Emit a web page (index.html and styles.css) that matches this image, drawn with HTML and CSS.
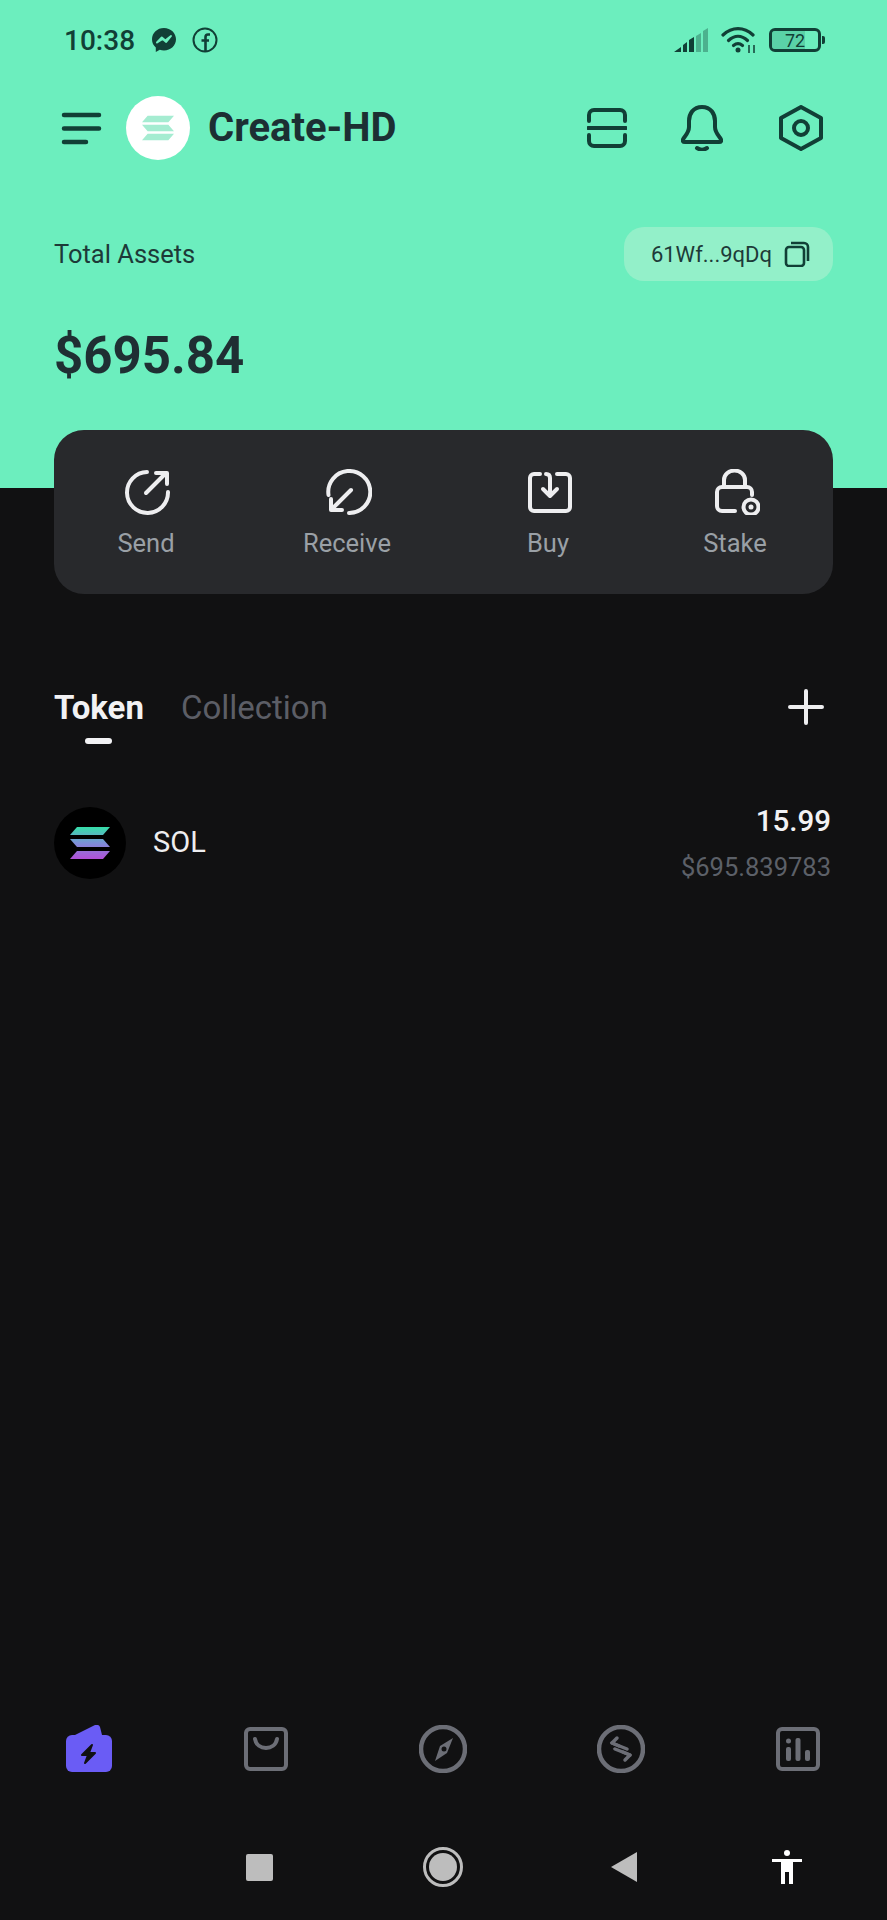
FILE: index.html
```html
<!DOCTYPE html>
<html lang="en">
<head>
    <meta charset="UTF-8">
    <meta name="viewport" content="width=device-width, initial-scale=1.0">
    <title>Create-HD</title>
    <link rel="stylesheet" href="styles.css">
</head>
<body>
<div class="app">
    <header class="hero">
        <div class="status">
            <div class="status-left">
                <span class="time">10:38</span>
                <svg class="st-icon msg" viewBox="0 0 26 26"><path fill="#113f36" d="M13 1C6.200 1 1 5.900 1 12.300c0 3.400 1.400 6.200 3.800 8.200V25l4-2.200c1.300.4 2.700.6 4.200.6 6.800 0 12-4.900 12-11.100S19.800 1 13 1z"/><path fill="none" stroke="#6ceebe" stroke-width="2" stroke-linejoin="round" d="M6 15.500l4.800-5 3.500 3 5.700-4.500-4.800 6-3.500-3z"/></svg>
                <svg class="st-icon fb" viewBox="0 0 26 26"><circle cx="13" cy="13" r="11.500" fill="none" stroke="#113f36" stroke-width="2"/><path fill="none" stroke="#113f36" stroke-width="2.600" d="M18 7.500h-2c-1.600 0-2.500 1-2.500 2.500v14.500M9.500 13.500h7.500"/></svg>
            </div>
            <div class="status-right">
                <svg class="signal" viewBox="0 0 35 24"><path fill="#113f36" d="M0 24l7-5v5zM9 17l4-3v10H9zM15 12l5-3v15h-5z"/><path fill="#113f36" opacity=".35" d="M22 8l5-3v19h-5zM29 3l5-3v24h-5z"/></svg>
                <svg class="wifi" viewBox="0 0 36 26"><g fill="none" stroke="#113f36" stroke-width="3.200" stroke-linecap="round"><path d="M2 8c9-8.500 21-8.500 30 0"/><path d="M7.500 13.500c6-5.500 13-5.500 19 0"/><path d="M12.500 18.500c3-2.500 6-2.500 9 0"/></g><circle cx="17" cy="23" r="2.500" fill="#113f36"/><path fill="none" stroke="#113f36" stroke-width="1.500" d="M28 18v8M33 18v8"/></svg>
                <div class="battery">
                    <div class="battery-body">
                        <div class="battery-fill"></div>
                        <span class="battery-num">72</span>
                    </div>
                    <div class="battery-cap"></div>
                </div>
            </div>
        </div>

        <div class="toolbar">
            <svg class="menu-icon" viewBox="0 0 41 33"><g stroke="#113f36" stroke-width="4.500" stroke-linecap="round"><path d="M3 3h35M3 16.500h35M3 30h22"/></g></svg>
            <div class="brand-logo">
                <svg viewBox="0 0 34 26"><path fill="#a5ecd1" d="M6 0h28l-6 7H0zM0 9.500h28l6 7H6zM6 19h28l-6 7H0z"/></svg>
            </div>
            <span class="brand-name">Create-HD</span>
            <div class="toolbar-actions">
                <svg class="scan-icon" viewBox="0 0 40 40"><g fill="none" stroke="#113f36" stroke-width="4" stroke-linecap="round"><path d="M2 13V7a5 5 0 0 1 5-5h26a5 5 0 0 1 5 5v6"/><path d="M2 27v6a5 5 0 0 0 5 5h26a5 5 0 0 0 5-5v-6"/><path d="M1 20h38"/></g></svg>
                <svg class="bell-icon" viewBox="0 0 42 46"><g fill="none" stroke="#113f36" stroke-width="4" stroke-linecap="round" stroke-linejoin="round"><path d="M21 2C12 2 8 9 8 16v6c0 5-3 8-5.500 11.500C1 36 2 37 4 37h34c2 0 3-1 1.500-3.500C37 30 34 27 34 22v-6C34 9 30 2 21 2z"/><path d="M16 43c3 2 7 2 10 0"/></g></svg>
                <svg class="hex-icon" viewBox="0 0 46 46"><g fill="none" stroke="#113f36" stroke-width="4" stroke-linejoin="round"><path d="M23 2l20 11v20L23 44 3 33V13z"/><circle cx="23" cy="23" r="7"/></g></svg>
            </div>
        </div>

        <div class="assets-row">
            <span class="assets-label">Total Assets</span>
            <div class="address">
                <span>61Wf...9qDq</span>
                <svg class="copy-icon" viewBox="0 0 26 26"><g fill="none" stroke="#113f36" stroke-width="2.600" stroke-linejoin="round"><rect x="2" y="6" width="18" height="19" rx="3"/><path d="M7 2h13a4 4 0 0 1 4 4v14"/></g></svg>
            </div>
        </div>
        <div class="amount">$695.84</div>
    </header>

    <section class="actions">
        <div class="action">
            <svg viewBox="0 0 46 46"><g fill="none" stroke="#eeeef0" stroke-width="4" stroke-linecap="round"><path d="M22 3A20.500 20.500 0 1 0 43 23"/><path d="M21 24L40 5"/><path d="M31 4h11v11" stroke-linejoin="round"/></g></svg>
            <span>Send</span>
        </div>
        <div class="action">
            <svg viewBox="0 0 46 46"><g fill="none" stroke="#eeeef0" stroke-width="4" stroke-linecap="round"><path d="M2.500 26A21 21 0 1 1 23 44"/><path d="M25 21L6 40"/><path d="M5 30v11h11" stroke-linejoin="round"/></g></svg>
            <span>Receive</span>
        </div>
        <div class="action">
            <svg viewBox="0 0 46 46"><g fill="none" stroke="#eeeef0" stroke-width="4" stroke-linecap="round" stroke-linejoin="round"><path d="M13 5H7a4 4 0 0 0-4 4v29a4 4 0 0 0 4 4h32a4 4 0 0 0 4-4V9a4 4 0 0 0-4-4h-9"/><path d="M19 5c3 0 4 2 4 4v17"/><path d="M16 20l7 7 7-7"/></g></svg>
            <span>Buy</span>
        </div>
        <div class="action">
            <svg viewBox="0 0 46 46"><g fill="none" stroke="#eeeef0" stroke-width="4" stroke-linecap="round" stroke-linejoin="round"><path d="M21 42H8a5 5 0 0 1-5-5V23a5 5 0 0 1 5-5h25a5 5 0 0 1 5 5v3"/><path d="M10 18v-7a10 9 0 0 1 21 0v7"/><circle cx="37" cy="38" r="7.500"/></g><circle cx="37" cy="38" r="2.500" fill="#eeeef0"/></svg>
            <span>Stake</span>
        </div>
    </section>

    <section class="tabs">
        <div class="tab active">
            <span>Token</span>
            <div class="tab-line"></div>
        </div>
        <div class="tab">
            <span>Collection</span>
        </div>
        <svg class="plus-icon" viewBox="0 0 36 36"><path stroke="#eeeef0" stroke-width="4" stroke-linecap="round" d="M18 2v32M2 18h32"/></svg>
    </section>

    <section class="token-row">
        <div class="token-left">
            <div class="token-logo">
                <svg viewBox="0 0 40 32">
                    <defs>
                        <linearGradient id="sol" x1="0" y1="1" x2="0" y2="0">
                            <stop offset="0" stop-color="#b14fd8"/>
                            <stop offset=".5" stop-color="#7d8fd8"/>
                            <stop offset="1" stop-color="#35dfa8"/>
                        </linearGradient>
                    </defs>
                    <path fill="url(#sol)" d="M7 0h33l-7 8H0zM0 12h33l7 8H7zM7 24h33l-7 8H0z"/>
                </svg>
            </div>
            <span class="token-name">SOL</span>
        </div>
        <div class="token-right">
            <span class="token-qty">15.99</span>
            <span class="token-value">$695.839783</span>
        </div>
    </section>

    <nav class="bottom-nav">
        <svg viewBox="0 0 48 48"><path fill="#6a5cf5" d="M11 10l20-10c2-1 4 0 5 2l2 8z"/><rect x="2" y="10" width="46" height="37" rx="6" fill="#6a5cf5"/><path fill="#111112" stroke="#111112" stroke-width="2" stroke-linejoin="round" d="M28 20l-10 10h6l-3 8 10-10h-6z"/></svg>
        <svg viewBox="0 0 48 48"><g fill="none" stroke="#6c6e76" stroke-width="4" stroke-linecap="round"><rect x="4" y="4" width="40" height="40" rx="4"/><path d="M13 14c2 12 20 12 22 0"/></g></svg>
        <svg viewBox="0 0 48 48"><circle cx="24" cy="24" r="22" fill="none" stroke="#6c6e76" stroke-width="4.500"/><path fill="#6c6e76" d="M34 13l-6 15-12 8 5-15z"/><circle cx="25" cy="24" r="2.500" fill="#111112"/></svg>
        <svg viewBox="0 0 48 48"><circle cx="24" cy="24" r="22" fill="none" stroke="#6c6e76" stroke-width="4.500"/><g fill="none" stroke="#6c6e76" stroke-width="3.500" stroke-linecap="round" stroke-linejoin="round"><path d="M15 18l15 6"/><path d="M20 13l-5 5 7 3"/><path d="M33 30l-15-6"/><path d="M28 35l5-5-7-3"/></g></svg>
        <svg viewBox="0 0 48 48"><rect x="4" y="4" width="40" height="40" rx="4" fill="none" stroke="#6c6e76" stroke-width="4"/><g fill="#6c6e76"><rect x="12" y="22" width="5" height="14" rx="2"/><circle cx="14.500" cy="16" r="2.500"/><rect x="21.500" y="13" width="5" height="23" rx="2"/><rect x="31" y="25" width="5" height="11" rx="2"/></g></svg>
    </nav>

    <div class="sys-bar">
        <div class="sys-square"></div>
        <div class="sys-home"></div>
        <svg class="sys-back" viewBox="0 0 26 30"><path fill="#bdbdbd" d="M26 0v30L0 15z"/></svg>
        <svg class="sys-person" viewBox="0 0 30 34"><g fill="#fff"><circle cx="15" cy="3" r="3"/><path d="M0 9h30v3h-9v22h-4V22h-4v12H9V12H0z"/></g></svg>
    </div>
</div>
</body>
</html>
```

FILE: styles.css
```css
* {
    box-sizing: border-box;
}
body {
    margin: 0;
    padding: 0;
    background-color: #111112;
    font-family: Roboto, "Liberation Sans", sans-serif;
}
svg {
    display: block;
}
.app {
    display: flex;
    flex-direction: column;
    height: 1920px;
    width: 887px;
}

/* green top */
.hero {
    flex: none;
    height: 488px;
    background-color: #6ceebe;
    padding: 0 54px;
}
.status {
    display: flex;
    justify-content: space-between;
    align-items: center;
    height: 80px;
    padding: 0 8px 0 10px;
}
.status-left,
.status-right {
    display: flex;
    align-items: center;
}
.time {
    font-size: 28px;
    font-weight: 500;
    color: #113f36;
    margin-right: 16px;
}
.st-icon {
    width: 26px;
    height: 26px;
}
.fb {
    margin-left: 15px;
}
.signal {
    width: 35px;
    height: 24px;
}
.wifi {
    width: 36px;
    height: 26px;
    margin-left: 12px;
}
.battery {
    display: flex;
    align-items: center;
    margin-left: 12px;
}
.battery-body {
    position: relative;
    display: flex;
    align-items: center;
    justify-content: center;
    width: 52px;
    height: 24px;
    border: 3px solid #113f36;
    border-radius: 6px;
    overflow: hidden;
}
.battery-fill {
    position: absolute;
    left: 0;
    top: 0;
    bottom: 0;
    width: 72%;
    background-color: #4fbf98;
    opacity: .6;
}
.battery-num {
    position: relative;
    font-size: 18px;
    color: #113f36;
}
.battery-cap {
    width: 3px;
    height: 8px;
    margin-left: 1px;
    background-color: #113f36;
    border-radius: 0 2px 2px 0;
}

.toolbar {
    display: flex;
    align-items: center;
    height: 96px;
    padding-left: 7px;
    padding-right: 9px;
}
.menu-icon {
    width: 41px;
    height: 33px;
    margin-right: 24px;
}
.brand-logo {
    display: flex;
    align-items: center;
    justify-content: center;
    width: 64px;
    height: 64px;
    border-radius: 50%;
    background-color: #fff;
    margin-right: 18px;
}
.brand-logo svg {
    width: 32px;
    height: 26px;
}
.brand-name {
    font-size: 40px;
    font-weight: 700;
    padding-bottom: 2px;
    color: #1c2f33;
}
.toolbar-actions {
    display: flex;
    align-items: center;
    margin-left: auto;
}
.scan-icon {
    width: 40px;
    height: 40px;
    margin-right: 54px;
}
.bell-icon {
    width: 42px;
    height: 46px;
    margin-right: 55px;
}
.hex-icon {
    width: 46px;
    height: 46px;
}

.assets-row {
    display: flex;
    justify-content: space-between;
    align-items: center;
    margin-top: 51px;
}
.assets-label {
    font-size: 25.500px;
    color: #1d3a38;
}
.address {
    display: flex;
    align-items: center;
    gap: 12px;
    height: 54px;
    padding: 0 23px 0 27px;
    background-color: #93f0c9;
    border-radius: 20px;
    font-size: 22px;
    color: #1d3a38;
}
.copy-icon {
    width: 26px;
    height: 26px;
}
.amount {
    margin-top: 45px;
    height: 60px;
    line-height: 60px;
    font-size: 51px;
    font-weight: 700;
    color: #1f2f33;
}

/* actions card */
.actions {
    display: grid;
    grid-template-columns: 184px 218px 184px 190px;
    justify-items: center;
    align-items: center;
    flex: none;
    height: 164px;
    margin: -58px 54px 0;
    padding-top: 3px;
    background-color: #28292c;
    border-radius: 30px;
}
.action {
    display: flex;
    flex-direction: column;
    align-items: center;
    gap: 13px;
}
.action svg {
    width: 46px;
    height: 46px;
    margin-left: 4px;
}
.action span {
    font-size: 25.500px;
    line-height: 30px;
    color: #9aa0a6;
}

/* tabs */
.tabs {
    display: flex;
    align-items: flex-start;
    flex: none;
    margin: 92px 54px 0;
}
.tab {
    display: flex;
    flex-direction: column;
    align-items: center;
    margin-right: 37px;
    font-size: 33px;
    line-height: 44px;
    color: #5c5e66;
}
.tab.active {
    font-weight: 700;
    color: #f2f2f4;
}
.tab-line {
    width: 27px;
    height: 6px;
    margin-top: 8px;
    background-color: #f2f2f4;
    border-radius: 3px;
}
.plus-icon {
    width: 36px;
    height: 36px;
    margin-left: auto;
    margin-top: 3px;
    margin-right: 9px;
}

/* token list */
.token-row {
    display: flex;
    justify-content: space-between;
    align-items: flex-start;
    flex: none;
    margin: 63px 56px 0 54px;
}
.token-left {
    display: flex;
    align-items: center;
    gap: 27px;
    height: 72px;
}
.token-logo {
    display: flex;
    align-items: center;
    justify-content: center;
    width: 72px;
    height: 72px;
    border-radius: 50%;
    background-color: #000;
}
.token-logo svg {
    width: 40px;
    height: 32px;
}
.token-name {
    font-size: 29px;
    padding-bottom: 3px;
    color: #eeeef0;
}
.token-right {
    display: flex;
    flex-direction: column;
    align-items: flex-end;
    gap: 18px;
}
.token-qty {
    font-size: 29.500px;
    line-height: 28px;
    font-weight: 500;
    color: #f2f2f4;
}
.token-value {
    font-size: 25.500px;
    line-height: 28px;
    color: #5c6068;
}

/* bottom */
.bottom-nav {
    display: flex;
    justify-content: space-between;
    flex: none;
    margin-top: auto;
    padding: 0 65px 0 64px;
}
.bottom-nav svg {
    width: 48px;
    height: 48px;
}
.sys-bar {
    display: grid;
    grid-template-columns: 184px 184px 178px 148px;
    justify-items: center;
    align-items: center;
    flex: none;
    height: 96px;
    margin: 46px 0 5px;
    padding-left: 167px;
}
.sys-square {
    width: 27px;
    height: 27px;
    background-color: #bdbdbd;
    border-radius: 2px;
}
.sys-home {
    width: 40px;
    height: 40px;
    border: 3px solid #bdbdbd;
    border-radius: 50%;
    background-color: #bdbdbd;
    background-clip: content-box;
    padding: 3px;
}
.sys-back {
    width: 26px;
    height: 30px;
}
.sys-person {
    width: 30px;
    height: 34px;
}
```
